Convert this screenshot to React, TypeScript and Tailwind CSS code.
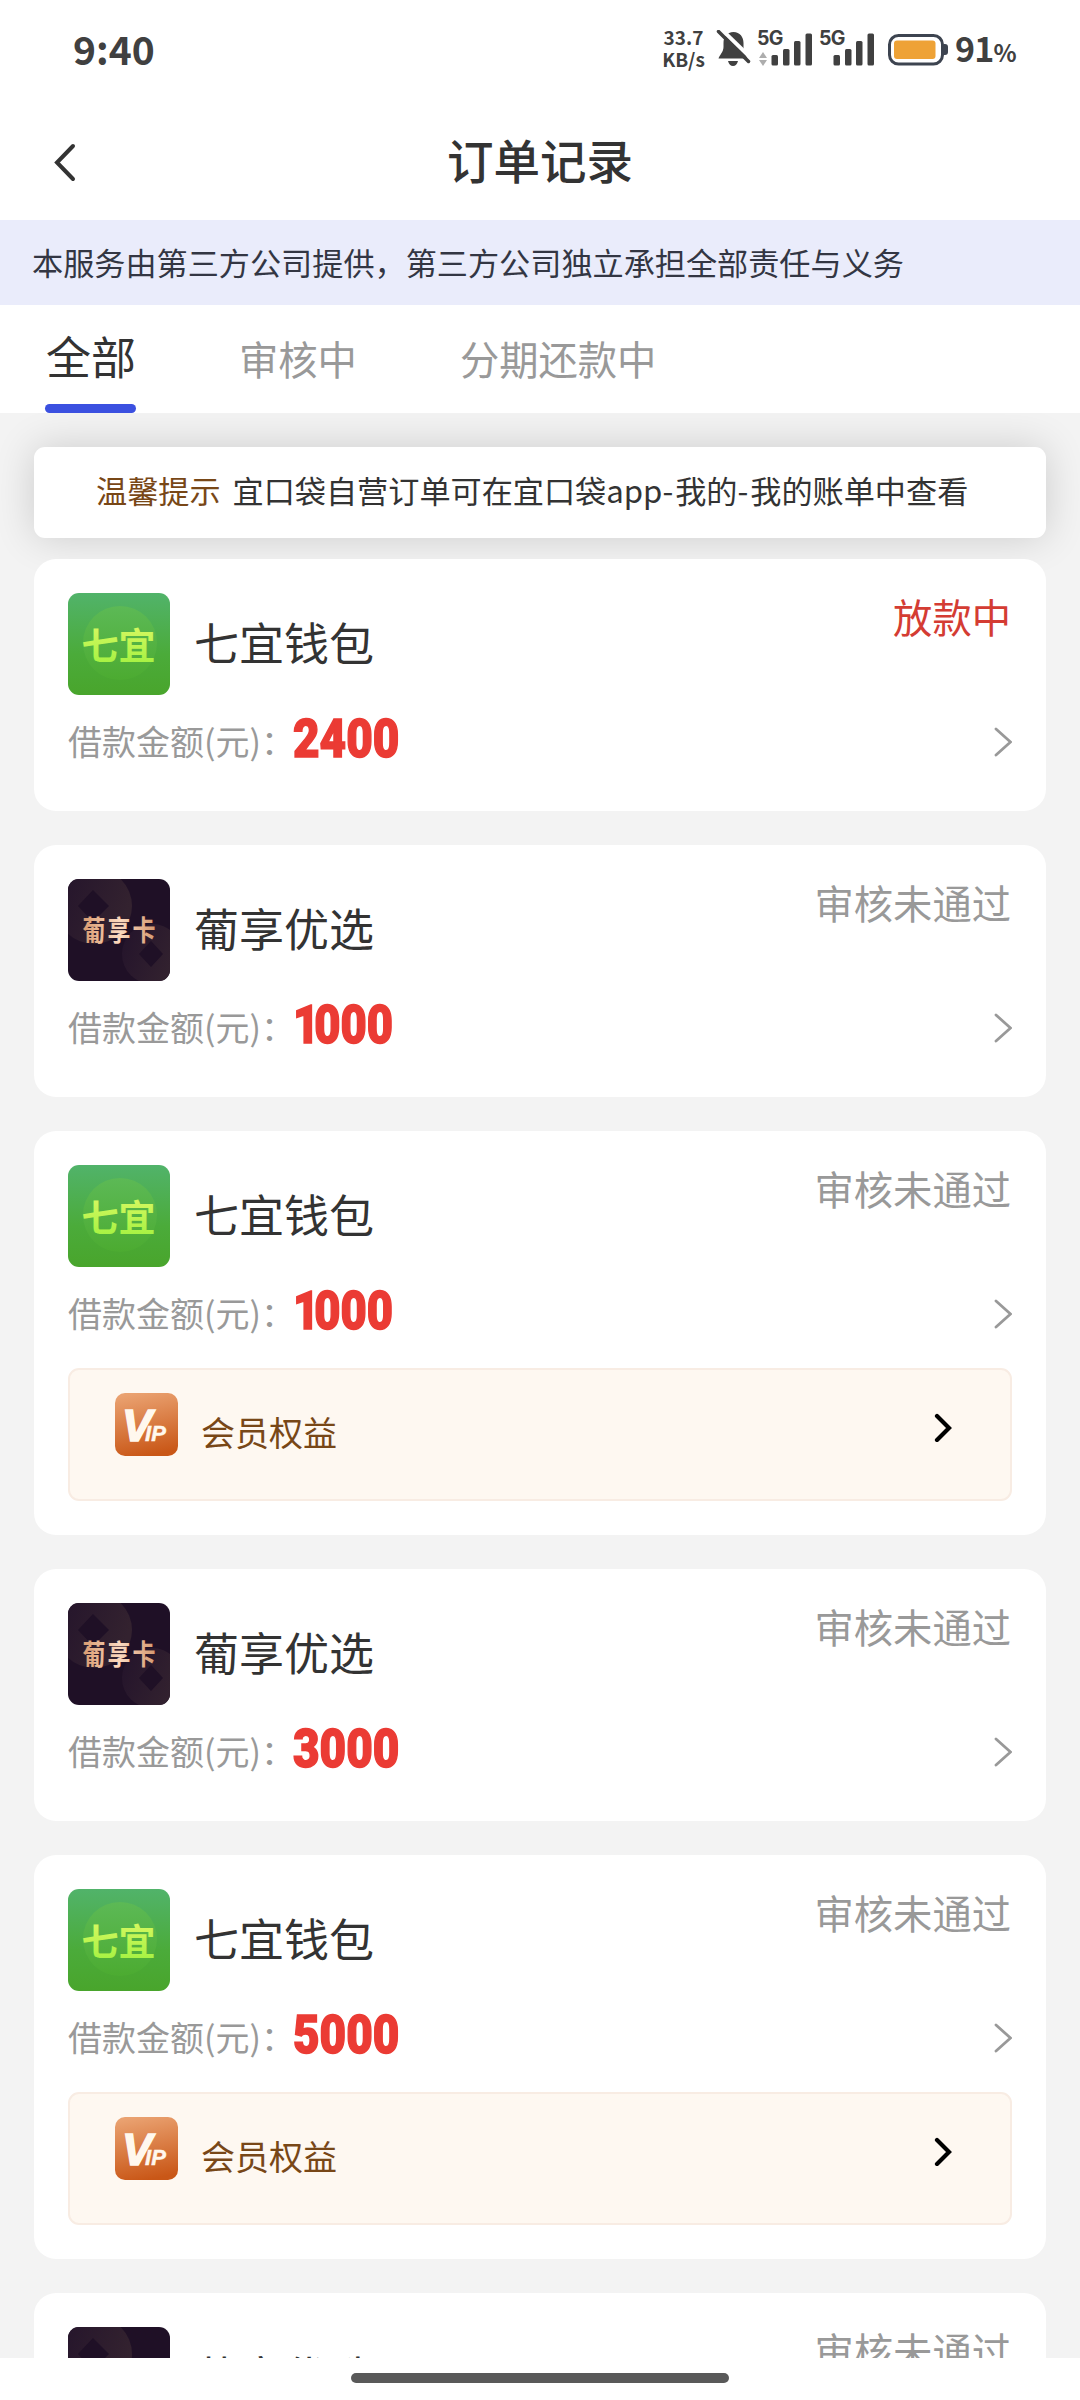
import React, { useState } from 'react';

type Order = {
  id: number;
  brand: 'qiyi' | 'puxiang';
  name: string;
  status: string;
  active?: boolean;
  amount: string;
  vip?: boolean;
};

const orders: Order[] = [
  { id: 1, brand: 'qiyi', name: '七宜钱包', status: '放款中', active: true, amount: '2400' },
  { id: 2, brand: 'puxiang', name: '葡享优选', status: '审核未通过', amount: '1000' },
  { id: 3, brand: 'qiyi', name: '七宜钱包', status: '审核未通过', amount: '1000', vip: true },
  { id: 4, brand: 'puxiang', name: '葡享优选', status: '审核未通过', amount: '3000' },
  { id: 5, brand: 'qiyi', name: '七宜钱包', status: '审核未通过', amount: '5000', vip: true },
  { id: 6, brand: 'puxiang', name: '葡享优选', status: '审核未通过', amount: '1000' },
];

const tabs = ['全部', '审核中', '分期还款中'];

function Signal({ data }: { data?: boolean }) {
  return (
    <svg width="55" height="36" viewBox="0 0 55 36" fill="#404040" className="shrink-0 overflow-visible">
      <text x="-1" y="15" fontSize="19.5" fontWeight="700" fontFamily="Inter, sans-serif" letterSpacing="-0.6">5G</text>
      {data && (
        <g fill="#adadad">
          <path d="M1 28 L5 22 L9 28 Z" />
          <path d="M1 30 L5 36 L9 30 Z" />
        </g>
      )}
      <rect x="13.5" y="25" width="6.5" height="10.5" rx="1.5" />
      <rect x="25" y="19" width="6.5" height="16.5" rx="1.5" />
      <rect x="36" y="11" width="6.5" height="24.5" rx="1.5" />
      <rect x="47.5" y="3.5" width="6.5" height="32" rx="1.5" />
    </svg>
  );
}

function StatusBar() {
  return (
    <div className="flex h-24 items-center justify-between pl-[73px] pr-[65px] text-[#404040]">
      <div className="text-[39px] font-bold leading-none">9:40</div>
      <div className="flex items-center">
        <div className="mr-[10px] flex w-[45px] flex-col items-center text-[19px] font-bold leading-[22px]">
          <span>33.7</span>
          <span>KB/s</span>
        </div>
        <svg width="35" height="36" viewBox="0 0 35 36" fill="#404040" className="mr-[7px] shrink-0">
          <path d="M17.5 2 C24 2 27.5 7 27.5 13 V18 C27.5 22 30 25 31.5 28.5 H2.5 C3.5 25 7.5 22 7.5 17 V13 C7.5 7 11 2 17.5 2 Z" />
          <path d="M12 31 H22 C21 34.5 19.5 36 17 36 C14.5 36 13 34.5 12 31 Z" />
          <path d="M4 -2 L37 30" stroke="#ffffff" strokeWidth="4" />
          <path d="M2.5 1.5 L32.5 31.5" stroke="#404040" strokeWidth="3.5" strokeLinecap="round" />
        </svg>
        <Signal data />
        <div className="w-[7px]" />
        <Signal />
        <svg width="60" height="32" viewBox="0 0 60 32" className="ml-[13px] mt-[3px] shrink-0">
          <rect x="1.5" y="1.5" width="53" height="28.5" rx="9" fill="none" stroke="#3d4450" strokeWidth="3" />
          <rect x="6" y="6.5" width="41.5" height="18.5" rx="3" fill="#eea236" />
          <path d="M56 10 H57 Q60 10 60 13 V18 Q60 21 57 21 H56 Z" fill="#3d4450" />
        </svg>
        <div className="ml-[7px] flex w-[60px] items-baseline text-[34px] font-bold leading-none tracking-[-0.8px]">
          91<span className="text-[24px]">%</span>
        </div>
      </div>
    </div>
  );
}

function QiyiLogo() {
  return (
    <svg width="102" height="102" viewBox="0 0 102 102" className="shrink-0 rounded-[11px]">
      <defs>
        <linearGradient id="qiyiBg" x1="0" y1="0" x2="0" y2="1">
          <stop offset="0" stopColor="#51b36a" />
          <stop offset="0.6" stopColor="#4bab3a" />
          <stop offset="1" stopColor="#49a52c" />
        </linearGradient>
        <linearGradient id="qiyiRing" x1="0" y1="0" x2="0" y2="1">
          <stop offset="0" stopColor="#5cb956" />
          <stop offset="1" stopColor="#4cab31" />
        </linearGradient>
        <linearGradient id="qiyiText" x1="0" y1="0" x2="0" y2="1">
          <stop offset="0" stopColor="#e2f968" />
          <stop offset="1" stopColor="#9df13d" />
        </linearGradient>
      </defs>
      <rect width="102" height="102" fill="url(#qiyiBg)" />
      <circle cx="52" cy="50" r="37" fill="url(#qiyiRing)" />
      <text x="13.5" y="66.5" fontSize="37" fontWeight="700" fill="url(#qiyiText)">七宜</text>
    </svg>
  );
}

function PuxiangLogo() {
  return (
    <svg width="102" height="102" viewBox="0 0 102 102" className="shrink-0 rounded-[11px]">
      <defs>
        <linearGradient id="pxRing" x1="0" y1="0" x2="1" y2="0.4">
          <stop offset="0" stopColor="#23132b" />
          <stop offset="1" stopColor="#33222f" />
        </linearGradient>
        <linearGradient id="pxText" x1="0" y1="0" x2="1" y2="0">
          <stop offset="0" stopColor="#d99b70" />
          <stop offset="0.5" stopColor="#fbd9bf" />
          <stop offset="1" stopColor="#d2956c" />
        </linearGradient>
      </defs>
      <rect width="102" height="102" fill="#1f1026" />
      <circle cx="26" cy="27" r="38" fill="url(#pxRing)" />
      <path d="M25 11 L41 27 L25 43 L10 27 Z" fill="#1f1026" />
      <circle cx="84" cy="75" r="30" fill="url(#pxRing)" />
      <path d="M83 62 L95 75 L83 88 L71 75 Z" fill="#1f1026" />
      <g transform="translate(14.5 62) scale(1 1.25)">
        <text fontSize="23" fontWeight="700" letterSpacing="2" fill="url(#pxText)">葡享卡</text>
      </g>
    </svg>
  );
}

function VipIcon() {
  return (
    <svg width="63" height="63" viewBox="0 0 63 63" className="shrink-0 overflow-visible">
      <defs>
        <linearGradient id="vipBg" x1="0.3" y1="0" x2="0.5" y2="1">
          <stop offset="0" stopColor="#eaa271" />
          <stop offset="1" stopColor="#c95717" />
        </linearGradient>
      </defs>
      <rect width="63" height="63" rx="10" fill="url(#vipBg)" />
      <text x="7" y="48" fontSize="45" fontStyle="italic" fontWeight="700" fontFamily="'Liberation Sans', sans-serif" fill="#fff8ee" stroke="#fff8ee" strokeWidth="1.6">
        V<tspan dx="-7" fontSize="22" strokeWidth="0.5">IP</tspan>
      </text>
    </svg>
  );
}

function OrderCard({ order }: { order: Order }) {
  return (
    <div className="shrink-0 rounded-[22px] bg-white p-[34px]">
      <div className="flex h-[102px] items-start">
        {order.brand === 'qiyi' ? <QiyiLogo /> : <PuxiangLogo />}
        <div className="ml-6 flex-1 text-[45px] leading-[98px] text-[#333]">{order.name}</div>
        <div className={`mr-px text-[39.3px] leading-[46px] ${order.active ? 'text-[#d43c33]' : 'text-[#999]'}`}>
          {order.status}
        </div>
      </div>
      <div className="flex h-[82px] items-center pt-[10px]">
        <div className="w-[225px] whitespace-nowrap text-[34px] leading-none text-[#999]">借款金额(元)：</div>
        {/* a leading 1 is set tighter than the other digits */}
        <div
          className={`origin-left pb-[4px] font-[Roboto] text-[54px] font-black leading-none text-[#eb3b34] [-webkit-text-stroke:1.5px_#eb3b34] ${
            order.amount.startsWith('1') ? 'scale-x-[0.84] first-letter:tracking-[-6px]' : 'scale-x-[0.85]'
          }`}
        >
          {order.amount}
        </div>
        <svg width="18" height="30" viewBox="0 0 18 30" className="ml-auto mt-[2px]" fill="none" stroke="#999" strokeWidth="2.8" strokeLinecap="round">
          <path d="M2 2 L16.5 15 L2 28" />
        </svg>
      </div>
      {order.vip && (
        <div className="mt-[19px] flex h-[133px] items-start rounded-[11px] border-2 border-[#f8ece3] bg-[#fef8f1] pl-[45px] pr-[58px] pt-[23px]">
          <VipIcon />
          <div className="ml-[23px] flex-1 pt-[14px] text-[34px] leading-[50px] text-[#784717]">会员权益</div>
          <svg width="18" height="30" viewBox="0 0 18 30" className="mt-[19px]" fill="none" stroke="#000" strokeWidth="4.2" strokeLinecap="round">
            <path d="M3 4 L15 16 L3 28" />
          </svg>
        </div>
      )}
    </div>
  );
}

function App() {
  const [activeTab, setActiveTab] = useState('全部');

  return (
    <div className="flex h-[2400px] w-[1080px] flex-col overflow-hidden bg-white font-['Noto_Sans_CJK_SC',sans-serif]">
      <StatusBar />

      {/* Header */}
      <div className="flex h-[124px] items-center pl-[53px] pr-[77px] pt-2">
        <svg width="24" height="40" viewBox="0 0 24 40" fill="none" stroke="#333" strokeWidth="4" strokeLinecap="round">
          <path d="M20 4 L4 20.5 L20 37" />
        </svg>
        <h1 className="flex-1 pb-[5px] text-center text-[46.5px] font-medium leading-none text-[#333]">订单记录</h1>
      </div>

      <div className="h-[85px] bg-[#eaecfb] pl-[32px] text-[31.15px] leading-[83px] text-[#333643]">
        本服务由第三方公司提供，第三方公司独立承担全部责任与义务
      </div>

      {/* Tabs */}
      <div className="relative z-10 flex h-[108px] bg-white pl-[45px]">
        {tabs.map(tab => (
          <button
            key={tab}
            onClick={() => setActiveTab(tab)}
            className={`mr-[103px] flex flex-col justify-between ${tab === activeTab ? 'text-[45px] text-[#333]' : 'text-[39.3px] text-[#999]'}`}
          >
            <span className={tab === activeTab ? 'pl-px leading-[102px]' : 'pt-[2px] leading-[102px]'}>{tab}</span>
            {tab === activeTab && <span className="-mt-[5px] h-[9px] w-[91px] rounded-full bg-[#3b50e0]" />}
          </button>
        ))}
      </div>

      {/* Order list */}
      <div className="flex h-[1945px] shrink-0 flex-col overflow-hidden bg-[#f3f3f3] px-[34px] pt-[34px]">
        <div className="mb-[21px] h-[91px] shrink-0 whitespace-nowrap rounded-[11px] bg-white pl-[62px] text-[31.15px] leading-[86px] text-[#333] shadow-[0_0_40px_rgba(0,0,0,0.16)]">
          <span className="mr-[12px] text-[#784717]">温馨提示</span>
          宜口袋自营订单可在宜口袋app<span className="tracking-[2px]">-</span>我的<span className="tracking-[2px]">-</span>我的账单中查看
        </div>
        <div className="relative flex flex-col gap-[34px]">
          {orders.map(order => (
            <OrderCard key={order.id} order={order} />
          ))}
        </div>
      </div>

      {/* Home indicator */}
      <div className="flex h-[42px] shrink-0 justify-center pt-[15px]">
        <div className="h-[10px] w-[378px] rounded-full bg-[#595959]" />
      </div>
    </div>
  );
}

export default App;
